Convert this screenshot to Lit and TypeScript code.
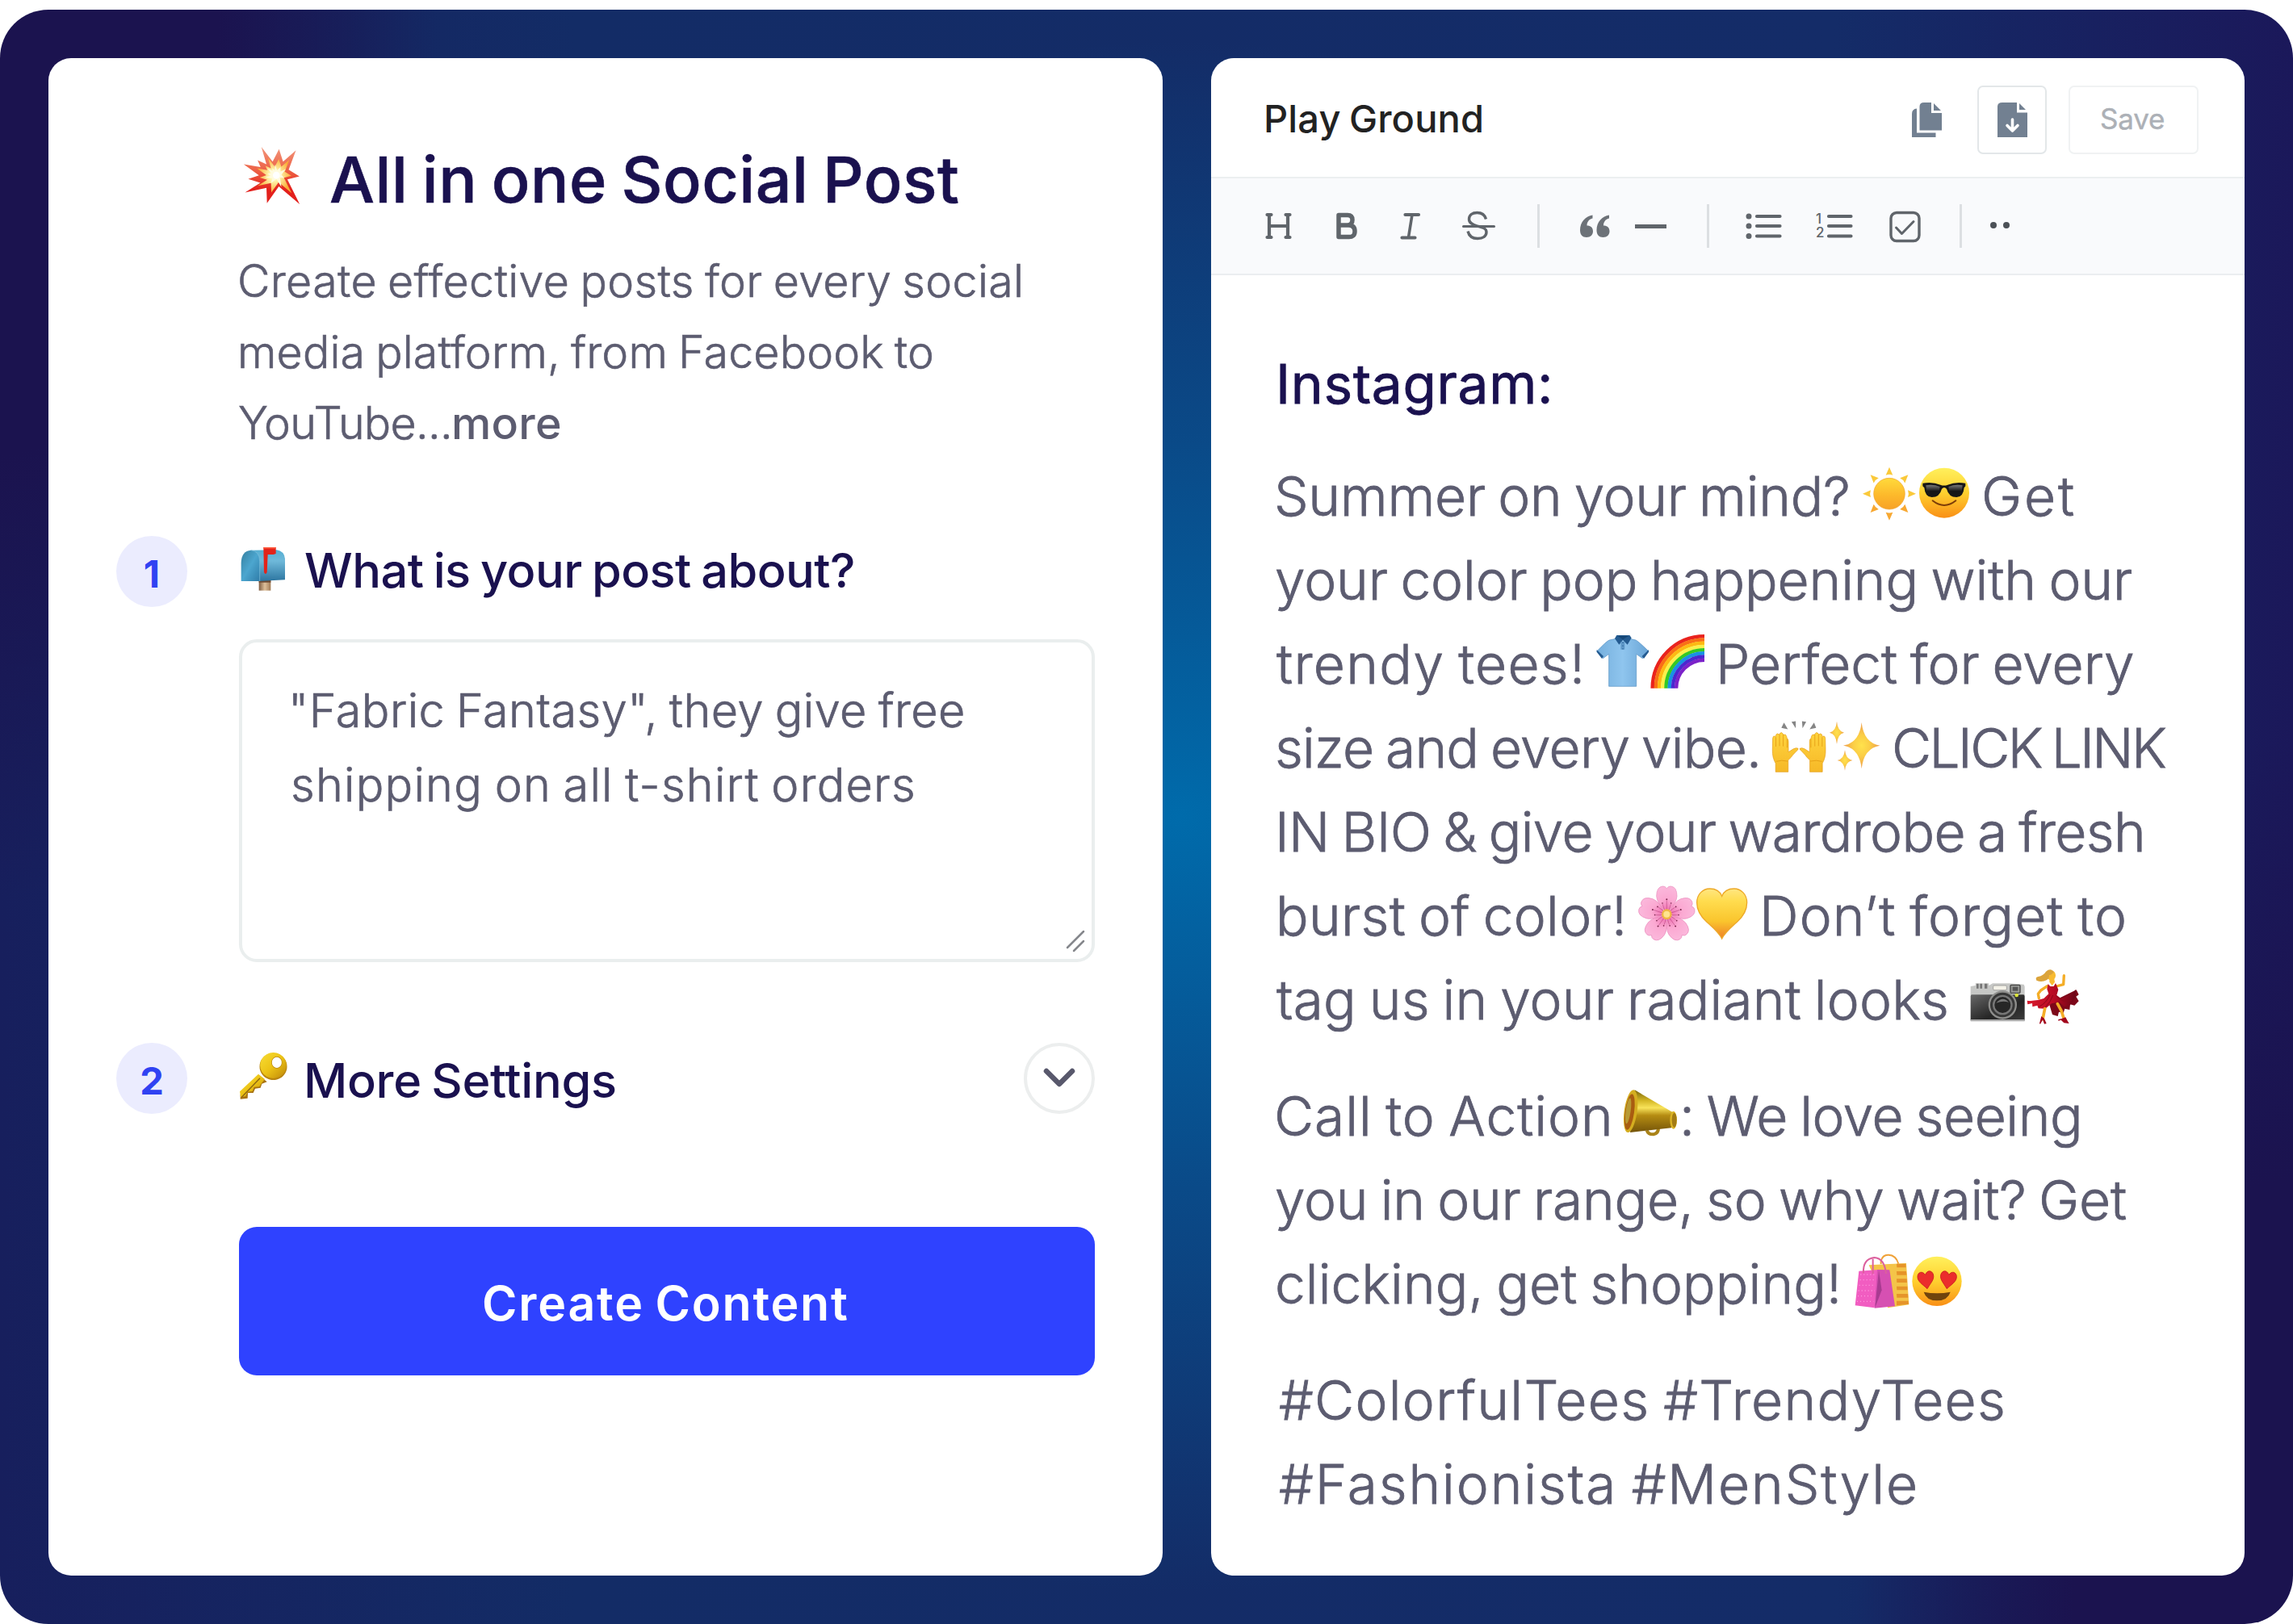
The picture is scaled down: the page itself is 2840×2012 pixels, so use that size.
import { LitElement, html, svg, css, nothing } from "lit";
import type { SVGTemplateResult } from "lit";
import { customElement, property } from "lit/decorators.js";
import { styleMap } from "lit/directives/style-map.js";

interface Piece {
  from: number;
  to: number;
  text?: string;
  emoji?: string;
  strong?: boolean;
}

const t = (from: number, to: number, text: string, strong = false): Piece => ({
  from,
  to,
  text,
  strong,
});

const e = (from: number, emoji: string): Piece => ({
  from,
  to: from + 68,
  emoji,
});

const intro: Piece[][] = [
  [t(1, 968, "Create effective posts for every social")],
  [t(2, 858, "media platform, from Facebook to")],
  [t(0, 260, "YouTube..."), t(267, 398, "more", true)],
];

const prompt: Piece[][] = [
  [t(1, 831, '"Fabric Fantasy", they give free')],
  [t(1, 769, "shipping on all t-shirt orders")],
];

const post: Piece[][][] = [
  [
    [
      t(2, 709, "Summer on your mind?"),
      e(726, "sun"),
      e(794, "cool"),
      t(878, 988, "Get"),
    ],
    [t(1, 1060, "your color pop happening with our")],
    [
      t(1, 378, "trendy tees!"),
      e(396, "shirt"),
      e(464, "rainbow"),
      t(551, 1062, "Perfect for every"),
    ],
    [
      t(2, 597, "size and every vibe."),
      e(614, "hands"),
      e(682, "sparkles"),
      t(767, 1102, "CLICK LINK"),
    ],
    [t(5, 1073, "IN BIO & give your wardrobe a fresh")],
    [
      t(5, 430, "burst of color!"),
      e(450, "blossom"),
      e(518, "heart"),
      t(605, 1051, "Don’t forget to"),
    ],
    [
      t(1, 831, "tag us in your radiant looks"),
      e(860, "camera"),
      e(928, "dancer"),
    ],
  ],
  [
    [
      t(2, 413, "Call to Action"),
      e(430, "megaphone"),
      t(505, 995, ": We love seeing"),
    ],
    [t(1, 1053, "you in our range, so why wait? Get")],
    [
      t(2, 696, "clicking, get shopping!"),
      e(717, "bags"),
      e(785, "love"),
    ],
  ],
  [
    [t(5, 901, "#ColorfulTees #TrendyTees")],
    [t(5, 792, "#Fashionista #MenStyle")],
  ],
];

const star = (cx: number, cy: number, rx: number, ry: number) =>
  svg`<path fill="url(#spark)" d="M${cx} ${cy - ry}Q${cx + rx * 0.12} ${cy - ry * 0.12} ${cx + rx} ${cy}Q${cx + rx * 0.12} ${cy + ry * 0.12} ${cx} ${cy + ry}Q${cx - rx * 0.12} ${cy + ry * 0.12} ${cx - rx} ${cy}Q${cx - rx * 0.12} ${cy - ry * 0.12} ${cx} ${cy - ry}Z"/>`;

const burst =
  "161,95 203,150 227,103 242,150 290,108 263,180 303,205 258,216 304,309 226,243 182,305 180,248 100,265 157,229 112,215 152,201 95,160 158,170 147,145 180,160";

const hand = svg`
  <path fill="url(#skin)" stroke="#e39a12" stroke-width="2" d="M16 205V172Q3 150 4 120L5 76Q6 66 13 68L17 70 18 62Q23 55 29 62L32 58Q39 50 44 59L47 63Q54 59 57 67L60 77Q65 79 65 88V129L84 117Q95 111 102 115 103 121 96 125L82 140Q76 150 64 160V205Z"/>
  <path fill="none" stroke="#e39a12" stroke-width="2.5" d="M17 72V108M31 62V106M45 62V107M60 78V112M18 165Q38 158 62 164"/>`;

const faceHeart =
  "M0 28C-14 12-27 4-25-10C-23-23-7-26 0-12C7-26 23-23 25-10C27 4 14 12 0 28Z";

const art: Record<string, { box: string; body: SVGTemplateResult }> = {
  boom: {
    box: "90 92 216 220",
    body: svg`
      <defs>
        <linearGradient id="fire" x1="0" y1="0" x2="0" y2="1"><stop offset="0" stop-color="#f2977c"/><stop offset=".45" stop-color="#ec5b40"/><stop offset=".75" stop-color="#e3201c"/></linearGradient>
        <radialGradient id="flash"><stop offset="0" stop-color="#fff"/><stop offset=".3" stop-color="#fff6b0"/><stop offset="1" stop-color="#f9ac36"/></radialGradient>
      </defs>
      <polygon points=${burst} fill="url(#fire)"/>
      <polygon points=${burst} fill="url(#flash)" transform="translate(218 200) scale(.62) translate(-214 -200)"/>
      <polygon points=${burst} fill="#fffbe0" transform="translate(218 200) rotate(18) scale(.34) translate(-214 -200)"/>
      <circle cx="217" cy="201" r="13" fill="#fff"/>`,
  },
  mailbox: {
    box: "0 0 180 180",
    body: svg`
      <defs>
        <linearGradient id="box" x1="0" y1="0" x2="0" y2="1"><stop offset="0" stop-color="#55aed2"/><stop offset=".35" stop-color="#6fb9da"/><stop offset="1" stop-color="#2c75a0"/></linearGradient>
        <linearGradient id="door" x1="0" y1="0" x2="1" y2="1"><stop offset="0" stop-color="#357f9f"/><stop offset=".5" stop-color="#4ca6cf"/><stop offset="1" stop-color="#2f7ca8"/></linearGradient>
        <linearGradient id="post"><stop offset="0" stop-color="#7d5c42"/><stop offset=".5" stop-color="#dfc09a"/><stop offset="1" stop-color="#a07a55"/></linearGradient>
      </defs>
      <path fill="url(#post)" d="M74 128h44v42H74z"/>
      <path fill="#6d4a33" d="M74 132h44v8H74z"/>
      <path fill="url(#box)" d="M44 20L140 19Q168 23 171 52V130L74 135V60Z"/>
      <path fill="url(#door)" d="M8 135V66Q10 22 44 20 77 23 77 62V135Z"/>
      <path fill="none" stroke="#7fc0dc" stroke-width="2" d="M44 20Q77 23 77 62V135"/>
      <path fill="#e3231a" d="M91 9h46v24l-9 3H107l-3 66q-5 12-11 0Z"/>
      <path fill="#ff5b3e" d="M91 9h46v5H91z"/>`,
  },
  key: {
    box: "0 0 180 180",
    body: svg`
      <defs><linearGradient id="gold" x1="0" y1="0" x2="1" y2="1"><stop offset="0" stop-color="#f8dd35"/><stop offset=".5" stop-color="#ecc316"/><stop offset="1" stop-color="#bd8508"/></linearGradient></defs>
      <path fill="#a87311" d="M73 86L104 112 85 119 80 134 60 137 53 153 33 153 32 173 5 176V160Z"/>
      <path fill="url(#gold)" d="M72 83L96 102 84 117 76 130 56 131 50 147 32 149 24 166 6 168 3 148Z"/>
      <path stroke="#8b6413" stroke-width="4" d="M78 98L10 169"/>
      <path fill="#b98510" fill-rule="evenodd" d="M127 5a51 50 0 1 0 1 0ZM141 20a18 20 0 1 1-1 0Z"/>
      <path fill="url(#gold)" fill-rule="evenodd" d="M127 3a49 48 0 1 0 1 0ZM141 18a20 22 0 1 1-1 0Z"/>`,
  },
  sun: {
    box: "0 0 204 204",
    body: svg`
      <defs><linearGradient id="sunny" x1="0" y1="0" x2="0" y2="1"><stop offset="0" stop-color="#ffda3b"/><stop offset=".55" stop-color="#fdb92b"/><stop offset="1" stop-color="#f7a127"/></linearGradient></defs>
      <circle cx="102" cy="104" r="58" fill="url(#sunny)" stroke="#eea32d" stroke-width="2"/>
      ${[0, 45, 90, 135, 180, 225, 270, 315].map(
        (a) =>
          svg`<path d="M89 35Q102 30 115 35L102 5Z" fill=${a > 90 && a < 270 ? "#f7a832" : "#fac93a"} transform="rotate(${a} 102 104)"/>`
      )}`,
  },
  cool: {
    box: "0 0 204 204",
    body: svg`
      <defs>
        <linearGradient id="face" x1="0" y1="0" x2="0" y2="1"><stop offset="0" stop-color="#fff05c"/><stop offset=".5" stop-color="#ffd02f"/><stop offset="1" stop-color="#f98f16"/></linearGradient>
        <linearGradient id="lens" x1="0" y1="0" x2="0" y2="1"><stop offset="0" stop-color="#7a7a7a"/><stop offset=".6" stop-color="#171717"/></linearGradient>
      </defs>
      <circle cx="102" cy="101" r="93" fill="url(#face)"/>
      <path fill="#171717" d="M22 65Q60 59 88 71Q101 76 115 71Q143 59 181 65V76L176 82Q173 117 148 117Q119 117 111 86Q102 76 93 86Q85 117 56 117Q31 117 28 82L22 76Z"/>
      <path fill="url(#lens)" d="M34 73Q60 67 86 78Q84 110 57 110Q35 109 34 73ZM118 78Q144 67 170 73Q168 110 147 110Q120 109 118 78Z"/>
      <path fill="none" stroke="#7d3d08" stroke-width="6" stroke-linecap="round" d="M59 130Q102 164 145 130"/>`,
  },
  shirt: {
    box: "0 0 204 204",
    body: svg`
      <defs><linearGradient id="cloth"><stop offset="0" stop-color="#75afdd"/><stop offset=".5" stop-color="#8fc5ee"/><stop offset="1" stop-color="#6aa5d6"/></linearGradient></defs>
      <path fill="url(#cloth)" stroke="#5590c2" stroke-width="2" d="M76 19L52 24Q42 27 5 66L28 92 50 76V196H152V76L175 92 198 66Q158 27 150 24L128 19Z"/>
      <path fill="#245b91" d="M5 60L30 84 24 93 5 68ZM198 60L173 84 180 93 198 68ZM79 6H127L134 16 119 41 102 24 88 41 72 18Z"/>
      <path fill="#164777" d="M82 8H124L102 22Z"/>
      <path fill="#6099c9" d="M94 30h15v29H94z"/>
      <path stroke="#2b659c" stroke-width="3" d="M102 31v5M102 43v5M102 54v5"/>`,
  },
  rainbow: {
    box: "0 0 204 204",
    body: svg`${["#e9231e", "#f96f16", "#fdb913", "#fbf04b", "#35c924", "#1892e4", "#4b28cf", "#7b22c9"].map(
      (c, i) =>
        svg`<path fill="none" stroke=${c} stroke-width="13.4" d="M${8 + i * 12.6} 203A${193 - i * 12.6} ${193 - i * 12.6} 0 0 1 201 ${10 + i * 12.6}"/>`
    )}`,
  },
  hands: {
    box: "0 0 210 204",
    body: svg`
      <defs><linearGradient id="skin" x1="0" y1="0" x2="0" y2="1"><stop offset="0" stop-color="#ffd43e"/><stop offset="1" stop-color="#f6b827"/></linearGradient></defs>
      <path fill="#858585" d="M48 16L63 42 38 36ZM77 13L93 11V38ZM117 11L133 13 119 38ZM163 16L171 36 146 42Z"/>
      ${hand}
      <g transform="translate(211 0) scale(-1 1)">${hand}</g>`,
  },
  sparkles: {
    box: "0 0 204 204",
    body: svg`
      <defs><radialGradient id="spark"><stop offset="0" stop-color="#ffe24c"/><stop offset=".45" stop-color="#fbce46"/><stop offset="1" stop-color="#ee9d4e"/></radialGradient></defs>
      ${star(131, 104, 68, 86)}${star(39, 56, 27, 42)}${star(69, 159, 28, 38)}`,
  },
  blossom: {
    box: "0 0 204 204",
    body: svg`
      <defs><radialGradient id="petal" cx=".5" cy=".9" r=".95"><stop offset="0" stop-color="#ee72b2"/><stop offset=".45" stop-color="#fba9d2"/><stop offset="1" stop-color="#fbb9dc"/></radialGradient></defs>
      ${[0, 72, 144, 216, 288].map(
        (a) => svg`<g transform="rotate(${a} 103 107)">
          <path fill="url(#petal)" stroke="#e989bb" stroke-width="2" d="M103 101Q66 66 65 40Q65 5 88 3Q97 2 103 11Q109 2 118 3Q141 5 141 40Q140 66 103 101Z"/>
          <path stroke="#b33b79" stroke-width="1.5" d="M103 94V56M96 96L88 70M110 96L118 70"/>
          <circle cx="103" cy="52" r="3" fill="#772448"/><circle cx="87" cy="66" r="2.5" fill="#772448"/><circle cx="119" cy="66" r="2.5" fill="#772448"/>
        </g>`
      )}
      <circle cx="103" cy="107" r="19" fill="#f0b744"/><circle cx="103" cy="107" r="12" fill="#ffe48e"/>`,
  },
  heart: {
    box: "0 0 204 204",
    body: svg`
      <defs><linearGradient id="amber" x1="0" y1="0" x2="0" y2="1"><stop offset="0" stop-color="#ffe681"/><stop offset=".25" stop-color="#ffdc4e"/><stop offset=".65" stop-color="#fac52d"/><stop offset="1" stop-color="#ee7f27"/></linearGradient></defs>
      <path fill="url(#amber)" stroke="#eda928" stroke-width="4" d="M104 198C92 174 72 158 47 135C20 111 11 88 11 64C11 34 32 12 59 12C81 12 97 22 104 40C111 22 127 12 149 12C176 12 197 34 197 64C197 88 188 111 161 135C136 158 116 174 104 198Z"/>`,
  },
  camera: {
    box: "0 0 204 204",
    body: svg`
      <defs><linearGradient id="body" x1="0" y1="0" x2="1" y2="1"><stop offset="0" stop-color="#676767"/><stop offset=".6" stop-color="#252525"/><stop offset="1" stop-color="#3c3c3c"/></linearGradient></defs>
      <path fill="#c6c7c5" d="M2 63L20 60V52H70V60L84 52H146L200 56 203 64V96H2Z"/>
      <path fill="#777" d="M24 53h8v18h-8zM37 53h8v18h-8zM54 53h10v18h-10z"/>
      <rect x="2" y="94" width="201" height="98" rx="5" fill="url(#body)"/>
      <path fill="#aaa" d="M2 186h201v7H2z"/>
      <rect x="86" y="60" width="50" height="17" rx="4" fill="#f4f2e8" stroke="#888" stroke-width="2"/>
      <rect x="150" y="58" width="36" height="30" rx="3" fill="#989996" stroke="#444" stroke-width="4"/>
      <rect x="158" y="65" width="20" height="15" fill="#555"/>
      <circle cx="121" cy="132" r="53" fill="#8e8e8c"/>
      <circle cx="121" cy="132" r="46" fill="#373737"/>
      <circle cx="121" cy="132" r="37" fill="#777"/>
      <circle cx="121" cy="132" r="30" fill="#262626"/>
      <path fill="#777" d="M97 125Q121 97 144 122Q121 115 97 125Z"/>
      <circle cx="173" cy="96" r="7" fill="#dce53a"/>`,
  },
  dancer: {
    box: "0 0 204 204",
    body: svg`
      <defs><linearGradient id="dress"><stop offset="0" stop-color="#d91b2e"/><stop offset=".55" stop-color="#b80a23"/><stop offset="1" stop-color="#690515"/></linearGradient></defs>
      <path fill="none" stroke="#f4ad27" stroke-width="10" stroke-linecap="round" stroke-linejoin="round" d="M83 62L59 78 49 91 52 107M116 63L143 56 145 23"/>
      <path fill="#7d0819" d="M90 128L107 117 191 76 200 94 190 101 200 118 184 134 168 130 166 150 148 146 143 162 126 158 122 174 102 168Z"/>
      <path fill="url(#dress)" d="M86 54L94 63 107 63 114 51 124 75 118 96 135 109 175 91 189 75 188 102 171 130 147 139 128 121 99 127 76 146 50 145 46 134 28 139 27 126 10 130 8 116Q39 119 70 108L88 91 82 73Z"/>
      <path fill="none" stroke="#f4ad27" stroke-width="11" stroke-linecap="round" d="M121 128L135 153 146 187M74 146L66 185"/>
      <path fill="none" stroke="#8b0719" stroke-width="3" d="M93 94Q81 124 52 139M104 96Q97 120 76 140M117 98Q137 127 174 115"/>
      <path fill="#f8bb32" d="M91 47L101 60 111 47 109 36Q119 24 110 10Q93 1 83 16L82 33 91 39Z"/>
      <path fill="#dba43b" d="M108 8Q94-6 78 8Q69 23 49 27Q37 29 43 41Q62 50 82 39Q93 31 89 20Q98 24 108 8Z"/>
      <path fill="#a2061c" d="M61 174L72 183 80 201 72 203 66 187 57 203 54 201ZM137 183L151 178 159 193 164 201 145 199 134 188 124 191V186Z"/>`,
  },
  megaphone: {
    box: "0 0 204 204",
    body: svg`
      <defs><linearGradient id="brass" x1="0" y1="0" x2="0" y2="1"><stop offset="0" stop-color="#77630d"/><stop offset=".25" stop-color="#d4b725"/><stop offset=".42" stop-color="#f8e35a"/><stop offset=".6" stop-color="#b58c12"/><stop offset="1" stop-color="#745409"/></linearGradient></defs>
      <path fill="none" stroke="#aa8318" stroke-width="12" d="M89 166Q94 182 114 181Q133 177 132 156"/>
      <path fill="url(#brass)" d="M44 16L184 98Q197 128 180 157L27 174Z"/>
      <ellipse cx="29" cy="95" rx="24" ry="80" fill="#d4ad20" transform="rotate(8 29 95)"/>
      <ellipse cx="25" cy="98" rx="17" ry="67" fill="#a95c11" transform="rotate(8 25 98)"/>
      <ellipse cx="20" cy="94" rx="9" ry="48" fill="#b89a34" transform="rotate(8 20 94)"/>
      <ellipse cx="188" cy="128" rx="13" ry="33" fill="#dbb424"/>
      <ellipse cx="191" cy="128" rx="9" ry="27" fill="#a37b13"/>`,
  },
  bags: {
    box: "0 0 204 204",
    body: svg`
      <path fill="none" stroke="#efa137" stroke-width="6" d="M98 39V28Q104 4 126 5Q154 6 163 38"/>
      <path fill="#f4c449" d="M53 43L192 36 202 190 124 202Z"/>
      <path fill="#e6942a" d="M156 38h34l1 14h-34zM156 66h36l1 14h-36zM156 94h38l1 14h-38zM156 122h40l1 14h-40zM156 150h42l1 14h-42zM156 176h44l1 12-45 5z"/>
      <path fill="#f15dc1" d="M16 65L92 60 74 202 2 193Z"/>
      <path fill="#d650b2" d="M84 60L130 61 150 196 74 203Z"/>
      <path fill="#a83b91" d="M90 63L101 136 76 201Z"/>
      <path fill="none" stroke="#ff9bde" stroke-width="4" stroke-dasharray="3 9" d="M22 78H82M20 98H79M17 118H77M14 138H75M12 158H72M9 178H70"/>
      <path fill="none" stroke="#dc609d" stroke-width="6" d="M33 73Q30 20 73 15Q111 17 117 75M68 76V20"/>`,
  },
  love: {
    box: "0 0 204 204",
    body: svg`
      <circle cx="102" cy="103" r="92" fill="url(#face)"/>
      <path fill="#eb2d2c" stroke="#c81f1b" stroke-width="2" d=${faceHeart} transform="translate(61 95) rotate(-8) scale(1.18 1.3)"/>
      <path fill="#eb2d2c" stroke="#c81f1b" stroke-width="2" d=${faceHeart} transform="translate(144 95) rotate(8) scale(1.18 1.3)"/>
      <path fill="#70430d" d="M53 143Q102 153 152 143Q142 175 102 175Q63 175 53 143Z"/>`,
  },
};

// Stretches one run of text so that its ink fills exactly the given width.
@customElement("fit-text")
export class FitText extends LitElement {
  static styles = css`
    :host {
      display: block;
      flex: none;
      white-space: pre;
      word-spacing: -0.05em;
    }
  `;

  @property() text = "";
  @property({ type: Number }) size = 0;

  firstUpdated() {
    const span = this.renderRoot.querySelector("span")!;
    const style = getComputedStyle(this);
    const ctx = document.createElement("canvas").getContext("2d")!;
    ctx.font = `${style.fontWeight} ${style.fontSize} ${style.fontFamily}`;
    const m = ctx.measureText(this.text);
    const left = -m.actualBoundingBoxLeft;
    const right = m.width - m.actualBoundingBoxRight;
    const ink = span.getBoundingClientRect().width - left - right;
    const gaps = [...this.text].length - 1;
    this.style.width = `${this.size}px`;
    this.style.textIndent = `${-left}px`;
    if (gaps > 0) {
      this.style.letterSpacing = `${(this.size - ink) / gaps}px`;
    }
  }

  render() {
    return html`<span>${this.text}</span>`;
  }
}

@customElement("app-root")
export default class AppRoot extends LitElement {
  static styles = css`
    :host {
      display: block;
      width: 2840px;
      height: 2012px;
      padding-top: 12px;
      box-sizing: border-box;
      background: #fff;
      font-family: Inter, "Open Sans", sans-serif;
      font-weight: 400;
      color: #5c5c70;
      overflow: hidden;
    }

    * {
      box-sizing: border-box;
    }

    svg {
      display: block;
      flex: none;
      overflow: visible;
    }

    .frame {
      display: grid;
      grid-template-columns: 1380px 1280px;
      gap: 60px;
      width: 2840px;
      height: 2000px;
      padding: 60px;
      border-radius: 60px;
      background:
        radial-gradient(ellipse 540px 1100px at 0 0, #1b134f 50%, transparent),
        radial-gradient(ellipse 540px 1100px at 100% 100%, #1b134f 50%, transparent),
        radial-gradient(ellipse 1150px 960px at 1460px 1000px, #006bab, #0a4a88 48%, transparent),
        linear-gradient(90deg, #171f5d, #132c66 25%, #142c68 80%, #1b185a);
    }

    .panel {
      height: 1880px;
      border-radius: 28px;
      background: #fff;
      overflow: hidden;
    }

    .form {
      padding: 103px 84px 0 84px;
    }

    .line {
      display: flex;
      align-items: flex-start;
    }

    .title {
      display: flex;
      padding-left: 156px;
      height: 96px;
      line-height: 95px;
      font-size: 79px;
      font-weight: 500;
      -webkit-text-stroke: 0.6px;
      color: #1a114f;
    }

    .title svg {
      width: 72px;
      height: 73px;
      margin: 6px 37px 0 0;
    }

    .intro {
      margin-top: 33px;
      padding-left: 152px;
      line-height: 88px;
      font-size: 55.5px;
      font-weight: 300;
      -webkit-text-stroke: 0.6px;
    }

    .strong {
      font-weight: 500;
      -webkit-text-stroke: 0;
    }

    .step {
      display: flex;
      height: 88px;
      font-size: 59.5px;
      font-weight: 500;
      color: #1a114f;
      line-height: 85px;
    }

    .first {
      margin-top: 96px;
    }

    .second {
      margin-top: 100px;
      line-height: 93px;
    }

    .number {
      width: 88px;
      height: 88px;
      margin-right: 64px;
      border-radius: 50%;
      background: #ebecfe;
      color: #3042f2;
      font-size: 47px;
      font-weight: 700;
      line-height: 93px;
      text-align: center;
    }

    .step .icon {
      width: 60px;
      height: 60px;
      margin: 11px 22px 0 0;
    }

    .second .icon {
      margin-right: 24px;
    }

    .toggle {
      display: flex;
      align-items: center;
      justify-content: center;
      width: 88px;
      height: 88px;
      margin-left: auto;
      border: 4px solid #eceeee;
      border-radius: 50%;
    }

    .toggle svg {
      width: 40px;
      height: 26px;
    }

    .textarea {
      display: flex;
      flex-direction: column;
      height: 400px;
      margin: 40px 0 0 152px;
      padding: 38px 8px 8px 62px;
      border: 4px solid #eaeeee;
      border-radius: 22px;
      line-height: 92px;
      font-size: 57.5px;
      font-weight: 300;
      -webkit-text-stroke: 0.7px;
    }

    .grip {
      width: 24px;
      height: 28px;
      margin: auto 0 0 auto;
    }

    .create {
      display: flex;
      justify-content: center;
      height: 184px;
      margin: 140px 0 0 152px;
      padding-right: 4px;
      border-radius: 22px;
      background: #2f42ff;
      color: #fff;
      font-size: 59px;
      font-weight: 600;
      line-height: 189px;
    }

    .header {
      display: flex;
      height: 149px;
      padding: 34px 57px 0 67px;
      border-bottom: 2px solid #eceff0;
    }

    .name {
      color: #222;
      font-size: 47px;
      font-weight: 500;
      line-height: 82px;
      margin-left: 1px;
      margin-right: auto;
    }

    .file {
      width: 37px;
      height: 43px;
      fill: #728091;
    }

    .copy {
      margin: 21px 44px 0 0;
    }

    .download {
      display: flex;
      align-items: center;
      justify-content: center;
      width: 86px;
      height: 85px;
      margin-right: 27px;
      border: 2px solid #e3e7e9;
      border-radius: 7px;
    }

    .save {
      display: flex;
      justify-content: center;
      width: 161px;
      height: 85px;
      padding-right: 3px;
      border: 2px solid #f0f2f3;
      border-radius: 7px;
      color: #acb0b6;
      font-size: 35px;
      line-height: 79px;
      -webkit-text-stroke: 0.4px;
    }

    .toolbar {
      display: flex;
      align-items: center;
      height: 120px;
      padding-left: 67px;
      border-bottom: 2px solid #ebeef0;
      background: #f9fafc;
      color: #60656b;
    }

    .tool {
      height: 40px;
      fill: none;
      stroke: currentColor;
      stroke-width: 4.2;
      stroke-linecap: round;
      stroke-linejoin: round;
    }

    .tool text {
      fill: currentColor;
      stroke: none;
      font-size: 17px;
      font-weight: 500;
    }

    .rule {
      width: 3px;
      height: 54px;
      background: #dcdfe2;
    }

    .post {
      padding: 83px 0 0 80px;
      font-size: 67.5px;
      font-weight: 300;
      line-height: 104px;
      -webkit-text-stroke: 0.8px;
    }

    .post svg {
      width: 68px;
      height: 68px;
      margin-top: 14px;
    }

    .heading {
      display: flex;
      padding-left: 5px;
      color: #1a114f;
      font-weight: 400;
      margin-bottom: 35px;
    }

    .para {
      margin-bottom: 40px;
    }
  `;

  private _emoji(name: string, cls = "") {
    const { box, body } = art[name];
    return html`<svg class=${cls} viewBox=${box}>${body}</svg>`;
  }

  private _lines(lines: Piece[][]) {
    return lines.map((pieces) => {
      let cursor = 0;
      return html`<div class="line">
        ${pieces.map((p) => {
          const gap = styleMap({ marginLeft: `${p.from - cursor}px` });
          cursor = p.to;
          return p.emoji
            ? html`<div style=${gap}>${this._emoji(p.emoji)}</div>`
            : html`<fit-text
                class=${p.strong ? "strong" : nothing}
                style=${gap}
                .text=${p.text!}
                .size=${p.to - p.from}
              ></fit-text>`;
        })}
      </div>`;
    });
  }

  private _tool(width: number, gap: number, body: SVGTemplateResult) {
    return html`<svg
      class="tool"
      style=${styleMap({ width: `${width}px`, marginRight: `${gap}px` })}
      viewBox="0 0 ${width} 40"
    >
      ${body}
    </svg>`;
  }

  private _rule(gap: number) {
    return html`<div
      class="rule"
      style=${styleMap({ marginRight: `${gap}px` })}
    ></div>`;
  }

  private _form() {
    return html`<section class="panel form">
      <div class="title">
        ${this._emoji("boom")}
        <fit-text .text=${"All in one Social Post"} .size=${778}></fit-text>
      </div>
      <div class="intro">${this._lines(intro)}</div>

      <div class="step first">
        <div class="number">1</div>
        ${this._emoji("mailbox", "icon")}
        <fit-text .text=${"What is your post about?"} .size=${679}></fit-text>
      </div>
      <div class="textarea">
        ${this._lines(prompt)}
        <svg class="grip" viewBox="0 0 24 28">
          <path
            d="M2 22L22 2M10 26L22 14"
            stroke="#85878c"
            stroke-width="2.5"
            stroke-linecap="round"
          />
        </svg>
      </div>

      <div class="step second">
        <div class="number">2</div>
        ${this._emoji("key", "icon")}
        <fit-text .text=${"More Settings"} .size=${382}></fit-text>
        <div class="toggle">
          <svg viewBox="0 0 40 26" fill="none">
            <path
              d="M4 4L20 20L36 4"
              stroke="#58586c"
              stroke-width="6.5"
              stroke-linecap="round"
              stroke-linejoin="round"
            />
          </svg>
        </div>
      </div>

      <div class="create">
        <fit-text .text=${"Create Content"} .size=${450}></fit-text>
      </div>
    </section>`;
  }

  private _header() {
    return html`<div class="header">
      <fit-text class="name" .text=${"Play Ground"} .size=${267}></fit-text>
      <svg class="file copy" viewBox="0 0 37 43">
        <path
          d="M0 14Q0 8 6 7.5V37.5H29.5V43H0ZM9.5 5Q9.5 0 15 0H24V13H37V34.5H9.5ZM27 1L36 10H27Z"
        />
      </svg>
      <div class="download">
        <svg class="file" viewBox="0 0 37 43">
          <path d="M0 5Q0 0 6 0H24V12.5H37V43H0ZM27 1L35 9H27Z" />
          <path
            d="M18.5 21V34M12 28.5L18.5 35L25 28.5"
            fill="none"
            stroke="#fff"
            stroke-width="3.6"
            stroke-linecap="round"
            stroke-linejoin="round"
          />
        </svg>
      </div>
      <div class="save">
        <fit-text .text=${"Save"} .size=${78}></fit-text>
      </div>
    </div>`;
  }

  private _toolbar() {
    return html`<div class="toolbar">
      ${this._tool(33, 55, svg`<path d="M2.5 6H7.5M25.5 6H30.5M2.5 34H7.5M25.5 34H30.5M5 6V34M28 6V34M5 20H28"/>`)}
      ${this._tool(26, 53, svg`<path stroke-width="5.5" d="M3 6.5H14Q20 6.5 20 12.5T14 19H3ZM3 19H15Q23 19 23 26.5T15 33.5H3Z"/>`)}
      ${this._tool(26, 51, svg`<path d="M6.5 6H23M2.5 34.5H18.5"/><path stroke-width="3.6" d="M15 6L10.5 34"/>`)}
      ${this._tool(41, 52, svg`<path stroke-width="3" d="M1.5 20.5H39.5"/><path stroke-width="3.4" stroke-linecap="butt" d="M29.5 11.5C28 6 24 3.5 18.5 3.5C12.5 3.5 8.5 6.5 8.5 11.5C8.5 16 12 18 18.5 20C26 22 30 23 30 27.5C30 32.5 26 35.5 19 35.5C12.5 35.5 8.5 32.5 7 26.5"/>`)}
      ${this._rule(50)}
      ${this._tool(37, 31, svg`<path id="q" fill="#6d7278" stroke="none" d="M15.5 6.5C7 7.5 0 15 0 25C0 31 3 34 8 34S16 31 16 26.5C16 22 13 19.5 8.5 19.5C8.5 15 11 11.5 15.5 10.5Z"/><use href="#q" x="20.5"/>`)}
      ${this._tool(39, 50, svg`<path stroke-width="5" stroke-linecap="butt" d="M0 20.5H39"/>`)}
      ${this._rule(45)}
      ${this._tool(45, 42, svg`<path stroke-width="7" d="M4 8h.01M4 20h.01M4 32.5h.01"/><path d="M14 8H42.5M14 20H42.5M14 32.5H42.5"/>`)}
      ${this._tool(46, 45, svg`<path d="M16 8H43.5M16 20H43.5M16 32.5H43.5"/><text x="0" y="17">1</text><text x="0" y="34">2</text>`)}
      ${this._tool(39, 48, svg`<rect x="2" y="3.5" width="35" height="35" rx="7" stroke-width="3.4"/><path stroke-width="3" d="M8.5 22L15.5 29.5L30 14.5"/>`)}
      ${this._rule(35)}
      ${this._tool(24, 0, svg`<path stroke="#4c5157" stroke-width="8" d="M4 19h.01M20 19h.01"/>`)}
    </div>`;
  }

  render() {
    return html`<main class="frame">
      ${this._form()}
      <section class="panel">
        ${this._header()} ${this._toolbar()}
        <div class="post">
          <div class="heading">
            <fit-text .text=${"Instagram:"} .size=${334}></fit-text>
          </div>
          ${post.map(
            (para) => html`<div class="para">${this._lines(para)}</div>`
          )}
        </div>
      </section>
    </main>`;
  }
}
